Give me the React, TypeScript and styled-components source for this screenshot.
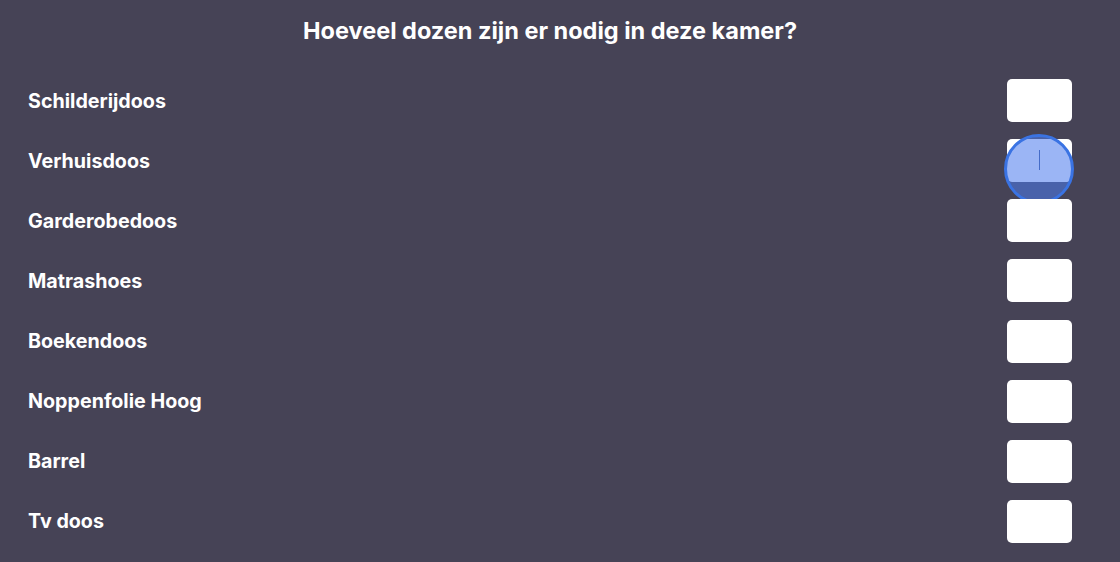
import React from 'react';
import styled, { createGlobalStyle } from 'styled-components';

const GlobalStyle = createGlobalStyle`
  html, body {
    margin: 0;
    padding: 0;
    background: #464356;
  }
  body {
    font-family: "Inter", "Noto Sans", sans-serif;
    overflow: hidden;
  }
`;

const items = [
  'Schilderijdoos',
  'Verhuisdoos',
  'Garderobedoos',
  'Matrashoes',
  'Boekendoos',
  'Noppenfolie Hoog',
  'Barrel',
  'Tv doos',
];

const Page = styled.div`
  width: 1120px;
  height: 562px;
  box-sizing: border-box;
  padding: 15px 48px 0 28px;
  display: flex;
  flex-direction: column;
`;

const Title = styled.h1`
  margin: 0;
  color: #ffffff;
  font-size: 23.5px;
  font-weight: 700;
  line-height: 32px;
  text-align: center;
`;

const List = styled.div`
  margin-top: 32px;
  display: flex;
  flex-direction: column;
  gap: 17.15px;
`;

const Row = styled.div`
  display: flex;
  align-items: center;
  justify-content: space-between;
  height: 43px;
`;

const Label = styled.span`
  color: #ffffff;
  font-size: 19.7px;
  font-weight: 700;
`;

const Field = styled.div`
  position: relative;
  width: 65px;
  height: 43px;
`;

const Input = styled.input`
  width: 100%;
  height: 100%;
  box-sizing: border-box;
  border: none;
  border-radius: 5px;
  background: #ffffff;
  outline: none;
  padding: 0;
`;

const Caret = styled.span`
  position: absolute;
  left: 32px;
  top: 11px;
  width: 1px;
  height: 20px;
  background: #3d5a9a;
`;

const Touch = styled.span`
  position: absolute;
  left: -3px;
  top: -5px;
  width: 70px;
  height: 70px;
  box-sizing: border-box;
  border-radius: 50%;
  border: 3px solid #3a73e3;
  background: rgba(77, 123, 237, 0.56);
  pointer-events: none;
`;

export default function App() {
  return (
    <>
      <GlobalStyle />
      <Page>
        <Title>Hoeveel dozen zijn er nodig in deze kamer?</Title>
        <List>
          {items.map((name, i) => (
            <Row key={name}>
              <Label>{name}</Label>
              <Field>
                <Input type="text" aria-label={name} />
                {i === 1 && (
                  <>
                    <Caret />
                    <Touch />
                  </>
                )}
              </Field>
            </Row>
          ))}
        </List>
      </Page>
    </>
  );
}
